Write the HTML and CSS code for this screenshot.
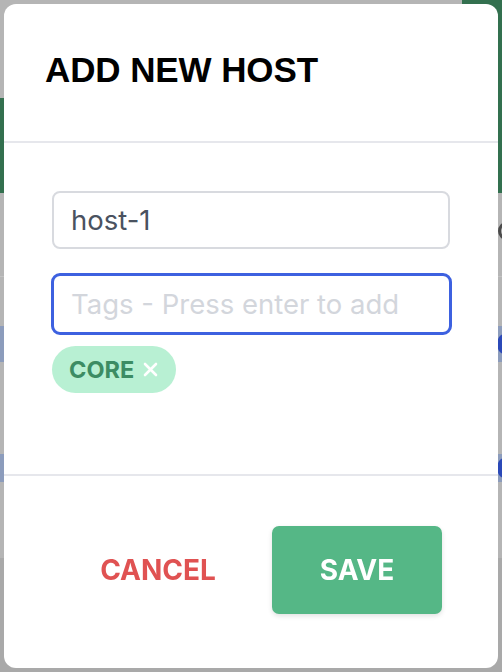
FILE: index.html
```html
<!DOCTYPE html>
<html>
<head>
<meta charset="utf-8">
<link rel="stylesheet" href="styles.css">
</head>
<body>
<div class="page">
  <div class="bg-top"><div class="bg-top-fill"></div><div class="bg-top-green"></div></div>
  <div class="bg-band"></div>
  <div class="bg-main">
    <div class="bg-row bg-row-a"><span class="bg-arc"></span></div>
    <div class="bg-line"></div>
    <div class="bg-row bg-row-b"></div>
    <div class="bg-row bg-row-blue"><span class="bg-dot"></span></div>
    <div class="bg-row bg-row-c"></div>
    <div class="bg-row bg-row-blue2"><span class="bg-dot"></span></div>
    <div class="bg-row bg-row-d"></div>
  </div>
  <div class="bg-bottom"></div>
</div>

<div class="modal">
  <div class="modal-header">
    <h2 class="modal-title">ADD NEW HOST</h2>
  </div>
  <div class="modal-body">
    <input class="field" type="text" value="host-1">
    <input class="field field-focus" type="text" placeholder="Tags - Press enter to add">
    <div class="tags">
      <span class="tag">CORE
        <svg class="tag-x" width="15" height="15" viewBox="0 0 15 15"><path d="M2 2L13 13M13 2L2 13" stroke="#ffffff" stroke-width="2.6" stroke-linecap="round"/></svg>
      </span>
    </div>
  </div>
  <div class="modal-footer">
    <button class="btn btn-cancel">CANCEL</button>
    <button class="btn btn-save">SAVE</button>
  </div>
</div>
</body>
</html>
```

FILE: styles.css
```css
* { box-sizing: border-box; }
html, body { margin: 0; padding: 0; }
body {
  width: 502px;
  height: 672px;
  overflow: hidden;
  background: #a9a9a9;
  font-family: Inter, "Noto Sans", sans-serif;
}

.page { display: flex; flex-direction: column; width: 502px; }
.bg-top { display: flex; height: 98px; }
.bg-top-fill { flex: 1; background: #b5b5b5; }
.bg-top-green { width: 40px; background: #33704f; }
.bg-band { height: 95px; background: #33704f; }
.bg-main { display: flex; flex-direction: column; background: #b5b5b5; height: 365px; }
.bg-row { display: flex; justify-content: flex-end; align-items: center; overflow: hidden; }
.bg-row-a { height: 83px; }
.bg-arc {
  width: 16px;
  height: 18px;
  border: 3px solid #4a4a4a;
  border-radius: 50%;
  margin-right: -12px;
  margin-top: -8px;
}
.bg-line { height: 1px; background: #c2c2c2; }
.bg-row-b { height: 49px; }
.bg-row-blue { height: 36px; background: #8c9cbc; }
.bg-row-c { height: 92px; }
.bg-row-blue2 { height: 28px; background: #8c9cbc; }
.bg-row-d { flex: 1; }
.bg-dot { width: 14px; height: 20px; border-radius: 50%; background: #2b49b8; margin-right: -9px; }
.bg-bottom { flex: 1; height: 114px; background: #a8a8a8; }

.modal {
  position: fixed;
  top: 4px;
  left: 4px;
  width: 494px;
  height: 664px;
  background: #ffffff;
  border-radius: 12px;
  display: flex;
  flex-direction: column;
}

.modal-header {
  height: 139px;
  padding-left: 41px;
  display: flex;
  align-items: center;
  border-bottom: 2px solid #e6e7ec;
}
.modal-title {
  margin: 0;
  margin-top: -5px;
  font-family: "Liberation Sans", Arial, sans-serif;
  font-weight: 700;
  font-size: 35px;
  color: #000000;
  letter-spacing: -0.1px;
}

.modal-body {
  height: 333px;
  padding: 48px 48px 0 48px;
  display: flex;
  flex-direction: column;
  border-bottom: 2px solid #e6e7ec;
}

.field {
  display: block;
  width: 398px;
  height: 58px;
  border: 2px solid #d8dadf;
  border-radius: 8px;
  padding: 0 17px;
  font-family: Inter, "Noto Sans", sans-serif;
  font-size: 27.5px;
  color: #4a5260;
  outline: none;
  background: #ffffff;
}
.field-focus {
  margin-top: 24px;
  margin-left: -1px;
  width: 401px;
  height: 62px;
  border: 3px solid #3d61e0;
  border-radius: 9px;
  padding: 0 17px;
}
.field-focus::placeholder { color: #d3d6dc; }

.tags { display: flex; margin-top: 11px; }
.tag {
  display: inline-flex;
  align-items: center;
  gap: 9px;
  height: 47px;
  padding: 0 18px 0 17px;
  border-radius: 24px;
  background: #b8f0d3;
  color: #3c8c63;
  font-weight: 700;
  font-size: 23.5px;
}
.tag-x { display: block; }

.modal-footer {
  flex: 1;
  display: flex;
  justify-content: flex-end;
  align-items: center;
  gap: 29px;
  padding-right: 56px;
  padding-bottom: 4px;
}
.btn {
  width: 170px;
  height: 88px;
  border: none;
  border-radius: 7px;
  font-family: Inter, "Noto Sans", sans-serif;
  font-weight: 700;
  font-size: 28px;
  cursor: pointer;
}
.btn-cancel { background: transparent; color: #e05252; }
.btn-save {
  background: #55b786;
  color: #ffffff;
  box-shadow: 0 2px 5px rgba(0,0,0,0.12);
}
```
